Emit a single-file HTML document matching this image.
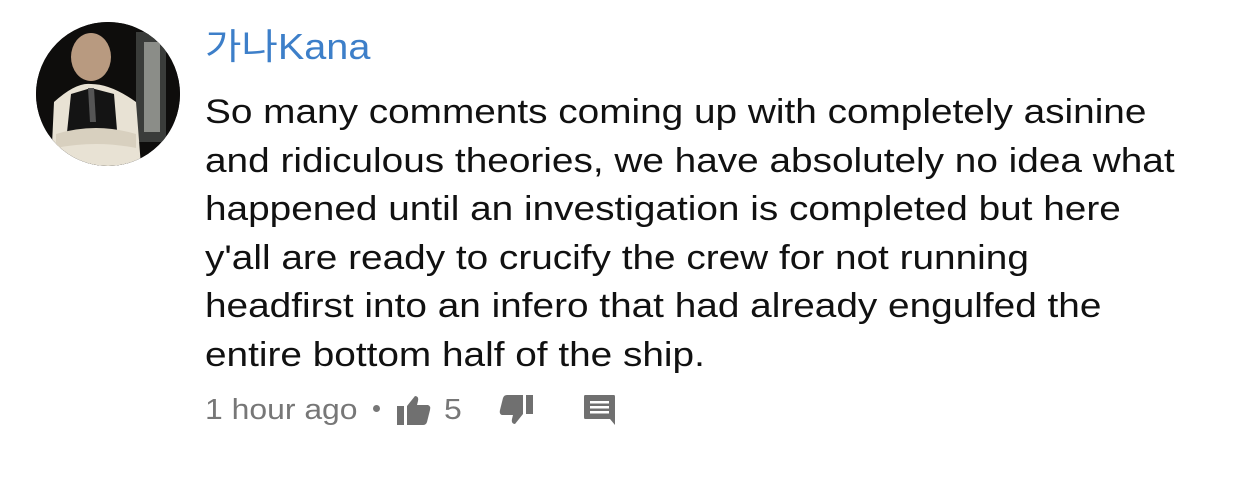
<!DOCTYPE html>
<html><head><meta charset="utf-8"><style>
html,body{margin:0;padding:0;background:#fff;width:1242px;height:489px;overflow:hidden}
body{position:relative;font-family:"Liberation Sans","Noto Sans CJK KR",sans-serif}
.av{position:absolute;left:36px;top:22px;width:144px;height:144px;border-radius:50%;overflow:hidden;background:#111}
.name{position:absolute;left:205px;top:24px;font-size:36px;color:#3d7fc9;line-height:46px;white-space:nowrap;transform:scaleX(1.1);transform-origin:0 0}
.body{position:absolute;left:205px;top:88px;font-size:34px;line-height:48.5px;color:#111;white-space:nowrap;transform:scaleX(1.14);transform-origin:0 0}
.act{position:absolute;top:390px;font-size:29px;color:#777;line-height:40px;white-space:nowrap;transform:scaleX(1.1);transform-origin:0 0}
</style></head><body>
<div class="av"><svg width="144" height="144" viewBox="0 0 144 144">
<rect width="144" height="144" fill="#0e0d0c"/>
<rect x="100" y="10" width="30" height="110" fill="#3a3c3a"/>
<rect x="108" y="20" width="16" height="90" fill="#8b8d88"/>
<ellipse cx="55" cy="35" rx="20" ry="24" fill="#b89a80"/>
<path d="M15 144 L18 80 Q40 60 55 62 Q75 62 100 80 L105 144Z" fill="#e8e2d4"/>
<path d="M35 72 L55 66 L78 72 L82 120 L30 120Z" fill="#141414"/>
<path d="M52 66 L58 66 L60 100 L54 100Z" fill="#555"/>
<path d="M20 112 Q60 100 100 112 L100 126 Q60 118 20 126Z" fill="#d8d0bf"/>
</svg></div>
<div class="name">가나Kana</div>
<div class="body">So many comments coming up with completely asinine<br>and ridiculous theories, we have absolutely no idea what<br>happened until an investigation is completed but here<br>y'all are ready to crucify the crew for not running<br>headfirst into an infero that had already engulfed the<br>entire bottom half of the ship.</div>
<div class="act" style="left:205px">1 hour ago</div>
<div style="position:absolute;left:373px;top:405px;width:7px;height:7px;border-radius:50%;background:#777"></div>
<svg style="position:absolute;left:396px;top:394px" width="36" height="32" viewBox="0 0 36 32"><rect x="1" y="12" width="7" height="19" fill="#707070"/><path d="M11 12 L19 2 Q23 2 22 7 L21 11 L32 11 Q35 12 34 16 L31 28 Q30 31 27 31 L11 31Z" fill="#707070"/></svg>
<div class="act" style="left:444px">5</div>
<svg style="position:absolute;left:498px;top:394px" width="36" height="32" viewBox="0 0 36 32"><rect x="28" y="1" width="7" height="19" fill="#707070"/><path d="M25 20 L17 30 Q13 30 14 25 L15 21 L4 21 Q1 20 2 16 L5 4 Q6 1 9 1 L25 1Z" fill="#707070"/></svg>
<svg style="position:absolute;left:583px;top:394px" width="34" height="32" viewBox="0 0 34 32"><path d="M2 1 H31 Q32 1 32 3 V31 L27 25 H2 Q1 25 1 23 V3 Q1 1 2 1Z" fill="#707070"/><rect x="7" y="7" width="19" height="2.5" fill="#fff"/><rect x="7" y="12" width="19" height="2.5" fill="#fff"/><rect x="7" y="17" width="19" height="2.5" fill="#fff"/></svg>
</body></html>
